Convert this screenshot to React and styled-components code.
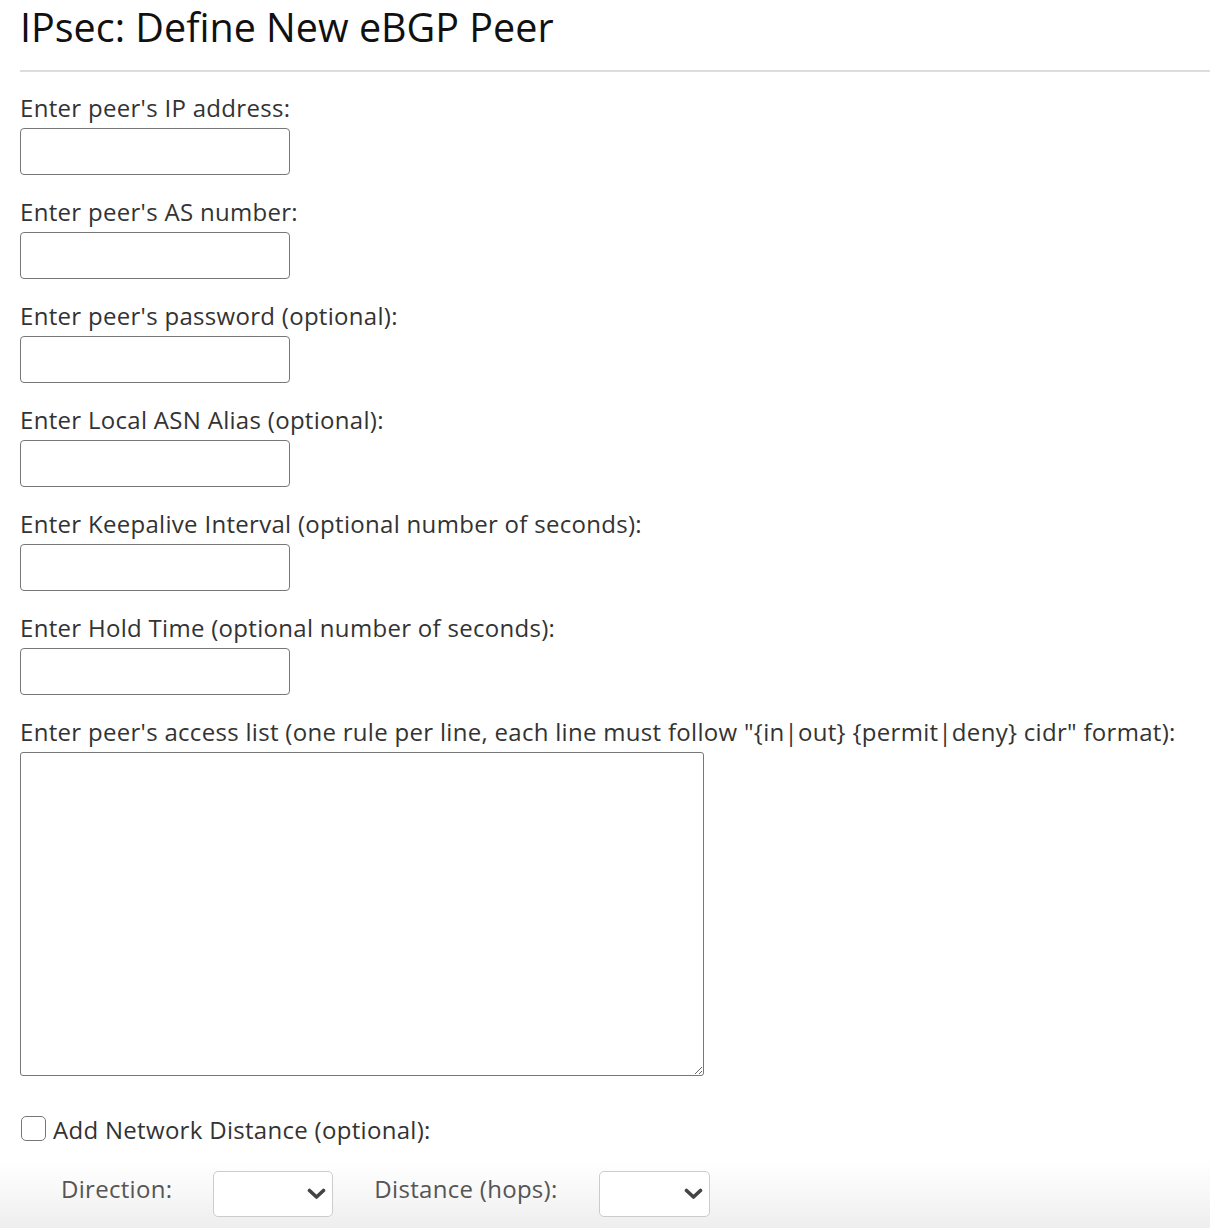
import React from 'react';
import styled, { createGlobalStyle } from 'styled-components';

const GlobalStyle = createGlobalStyle`
body {
margin: 0;
background: #ffffff;
font-family: 'Open Sans', 'DejaVu Sans', sans-serif;
}
`;

export const Page = styled.div`
padding-left: 20px;
min-height: 1228px;
box-sizing: border-box;
display: flex;
flex-direction: column;
`;

export const Title = styled.h1`
margin: 0 0 15px;
font-family: 'Open Sans', sans-serif;
font-weight: 400;
font-size: 39.5px;
line-height: 55px;
color: #111111;
`;

export const Divider = styled.hr`
margin: 0 0 20px;
border: none;
height: 2px;
background: #dddddd;
`;

export const Field = styled.div`
display: flex;
flex-direction: column;
align-items: flex-start;
margin-bottom: ${(props) => props.gap ?? 21}px;
`;

export const Label = styled.label`
display: block;
font-size: 24px;
line-height: 32px;
letter-spacing: 0.3px;
color: #333333;
margin-bottom: 4px;
`;

export const TextInput = styled.input`
box-sizing: border-box;
width: 270px;
height: 47px;
border: 1px solid #777777;
border-radius: 4px;
padding: 0 8px;
font-family: inherit;
font-size: 20px;
background: #ffffff;
`;

export const TextArea = styled.textarea`
box-sizing: border-box;
display: block;
width: 684px;
height: 324px;
border: 1px solid #777777;
border-radius: 3px;
padding: 8px;
font-family: inherit;
font-size: 20px;
background: #ffffff;
`;

export const CheckRow = styled.label`
display: flex;
align-items: center;
gap: 7px;
font-size: 24px;
line-height: 32px;
letter-spacing: 0.3px;
color: #333333;
margin: 38px 0 14px 1px;
`;

export const CheckBox = styled.input`
appearance: none;
margin: 0;
width: 25px;
height: 25px;
border: 1px solid #777777;
border-radius: 5px;
background: #ffffff;
box-sizing: border-box;
position: relative;
top: -2px;
`;

export const DistanceBar = styled.div`
margin-left: -20px;
flex: 1;
display: flex;
align-items: flex-start;
gap: 41px;
padding: 11px 0 11px 61px;
background: linear-gradient(to bottom, #ffffff 0%, #f9f9f9 40%, #eeeeee 100%);
`;

export const BarLabel = styled.span`
font-size: 24px;
line-height: 32px;
letter-spacing: 0.3px;
margin-top: 2px;
color: #555555;
`;

export const SelectWrap = styled.div`
position: relative;
width: ${(props) => props.width}px;
height: 46px;
`;

export const Select = styled.select`
appearance: none;
box-sizing: border-box;
width: 100%;
height: 100%;
border: 1px solid #cccccc;
border-radius: 5px;
background: #ffffff;
font-family: inherit;
font-size: 20px;
padding: 0 30px 0 10px;
`;

export const Chevron = styled.svg`
position: absolute;
right: 7px;
top: 17px;
pointer-events: none;
`;

const ChevronIcon = () => (
    <Chevron width="19" height="12" viewBox="0 0 19 12">
        <path d="M2.5 2.5 L9.5 9 L16.5 2.5" fill="none" stroke="#444444" strokeWidth="3.6" strokeLinecap="round" strokeLinejoin="round" />
    </Chevron>
);

const fields = [
    "Enter peer's IP address:",
    "Enter peer's AS number:",
    "Enter peer's password (optional):",
    "Enter Local ASN Alias (optional):",
    "Enter Keepalive Interval (optional number of seconds):",
    "Enter Hold Time (optional number of seconds):",
];

const App = () => {
    return (
        <>
            <GlobalStyle />
            <Page>
                <Title>IPsec: Define New eBGP Peer</Title>
                <Divider />
                {fields.map((text, i) => (
                    <Field key={i}>
                        <Label htmlFor={'f' + i}>{text}</Label>
                        <TextInput id={'f' + i} type={i === 2 ? 'password' : 'text'} />
                    </Field>
                ))}
                <Field gap={0}>
                    <Label htmlFor="acl">Enter peer's access list (one rule per line, each line must follow "{'{'}in|out{'}'} {'{'}permit|deny{'}'} cidr" format):</Label>
                    <TextArea id="acl" />
                </Field>
                <CheckRow>
                    <CheckBox type="checkbox" />
                    Add Network Distance (optional):
                </CheckRow>
                <DistanceBar>
                    <BarLabel>Direction:</BarLabel>
                    <SelectWrap width={120}>
                        <Select><option value=""></option></Select>
                        <ChevronIcon />
                    </SelectWrap>
                    <BarLabel>Distance (hops):</BarLabel>
                    <SelectWrap width={111}>
                        <Select><option value=""></option></Select>
                        <ChevronIcon />
                    </SelectWrap>
                </DistanceBar>
            </Page>
        </>
    )
}
export default App;
